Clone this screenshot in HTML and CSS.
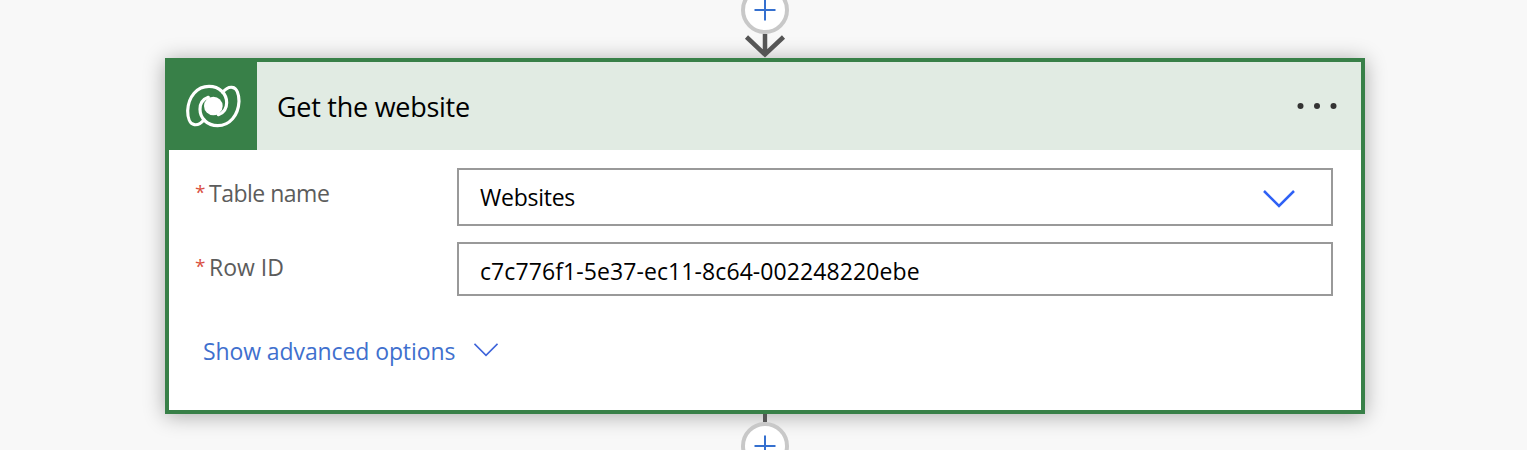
FILE: index.html
```html
<!DOCTYPE html>
<html lang="en">
<head>
<meta charset="utf-8">
<title>Get the website</title>
<link rel="stylesheet" href="styles.css">
</head>
<body>
<main class="flow">
  <div class="connector connector-in">
    <svg class="add" viewBox="0 0 48 48"><circle class="ring" cx="24" cy="24" r="22"/><path class="plus" d="M13.5 24H34.5M24 13.5V34.5"/></svg>
    <svg class="arrow" viewBox="0 0 44 24"><path d="M22 0V21M3.5 3L22 20.5L40.5 3"/></svg>
  </div>
  <section class="card">
    <header class="card-header">
      <div class="logo-tile">
        <svg class="logo" viewBox="84 96 180 144">
          <path class="lobe" d="M147 209C138 220 129 226 118 224C104 222 98 202 98 182C100 140 126 109 162 109C194 109 215 132 215 158C215 174 207 188 190 194"/>
          <path class="lobe" d="M203 127C212 116 221 110 232 112C246 114 252 134 252 154C250 196 224 227 188 227C156 227 135 204 135 178C135 162 143 148 160 142"/>
          <circle class="core" cx="175" cy="168" r="28"/>
        </svg>
      </div>
      <h1 class="title">Get the website</h1>
      <svg class="more" viewBox="0 0 40 8"><circle cx="3.5" cy="4" r="3"/><circle cx="20" cy="4" r="3"/><circle cx="36.5" cy="4" r="3"/></svg>
    </header>
    <div class="fields">
      <div class="row">
        <div class="label"><span class="required">*</span><span class="label-table">Table name</span></div>
        <div class="field select"><span class="value-table">Websites</span><svg class="chevron" viewBox="0 0 32 18"><path d="M1 1L16 16L31 1"/></svg></div>
      </div>
      <div class="row">
        <div class="label"><span class="required">*</span><span class="label-id">Row ID</span></div>
        <div class="field input"><span class="value-id">c7c776f1-5e37-ec11-8c64-002248220ebe</span></div>
      </div>
    </div>
    <div class="advanced"><span class="advanced-text">Show advanced options</span><svg class="chevron-small" viewBox="0 0 24 14"><path d="M.5 .8L12 12.3L23.5 .8"/></svg></div>
  </section>
  <div class="connector connector-out">
    <div class="stem"></div>
    <svg class="add" viewBox="0 0 48 48"><circle class="ring" cx="24" cy="24" r="22"/><path class="plus" d="M13.5 24H34.5M24 13.5V34.5"/></svg>
  </div>
</main>
</body>
</html>
```
FILE: styles.css
```css
* { box-sizing: border-box; }
body { margin: 0; background: #f8f8f8; font-family: "Segoe UI", "Open Sans", sans-serif; }
svg { display: block; flex: none; fill: none; }
.flow { width: 1530px; height: 450px; overflow: hidden; display: flex; flex-direction: column; align-items: center; }
.connector { display: flex; flex-direction: column; align-items: center; position: relative; z-index: 1; flex: none; }
.connector-in { margin-top: -14px; height: 72px; }
.connector-out { height: 60px; }
.add { width: 48px; height: 48px; }
.ring { fill: #fff; stroke: #c8c8c8; stroke-width: 4; }
.plus { stroke: #3570cf; stroke-width: 2; }
.arrow { width: 44px; height: 24px; stroke: #555; stroke-width: 4.5; }
.stem { width: 4px; height: 8px; background: #555; }
.card { width: 1200px; height: 356px; flex: none; border: 4px solid #388048; background: #fff; box-shadow: 0 2px 20px rgba(0, 0, 0, .32); }
.card-header { height: 88px; display: flex; align-items: center; background: #e1ebe3; padding-right: 24px; }
.logo-tile { width: 88px; height: 88px; display: grid; place-items: center; background: #388048; }
.logo { width: 60px; height: 48px; }
.lobe { stroke: #fff; stroke-width: 9.5; stroke-linecap: round; }
.core { fill: #fff; }
.title { margin: 2px 0 0 20px; font-size: 27px; font-weight: 400; line-height: 38px; letter-spacing: -.27px; color: #000; white-space: nowrap; }
.more { width: 40px; height: 8px; margin-left: auto; fill: #333; }
.fields { padding: 18px 28px 0 26px; display: grid; gap: 16px; }
.row { display: flex; align-items: flex-start; }
.label { width: 262px; display: flex; align-items: flex-start; line-height: 32px; padding-top: 9px; font-size: 23px; color: #5c5c5c; white-space: nowrap; }
.label-table { letter-spacing: -.5px; }
.required { width: 14px; color: #d9503f; font-size: 19px; line-height: 30px; }
.field { flex: 1; display: flex; align-items: center; border: 2px solid #999; padding: 0 36px 0 21px; font-size: 23px; line-height: 32px; color: #000; }
.select { height: 58px; }
.input { height: 54px; padding-top: 4px; }
.value-table { letter-spacing: -.25px; }
.value-id { letter-spacing: .09px; }
.chevron { width: 32px; height: 18px; margin: 4px 0 0 auto; stroke: #2f61f5; stroke-width: 2.5; }
.advanced { display: flex; align-items: center; margin: 39px 0 0 34px; height: 32px; font-size: 23px; line-height: 32px; color: #3f70ce; white-space: nowrap; }
.advanced-text { width: 270.5px; letter-spacing: -.1px; }
.chevron-small { width: 24px; height: 14px; margin-top: -2px; stroke: #3f65da; stroke-width: 1.6; }
```
